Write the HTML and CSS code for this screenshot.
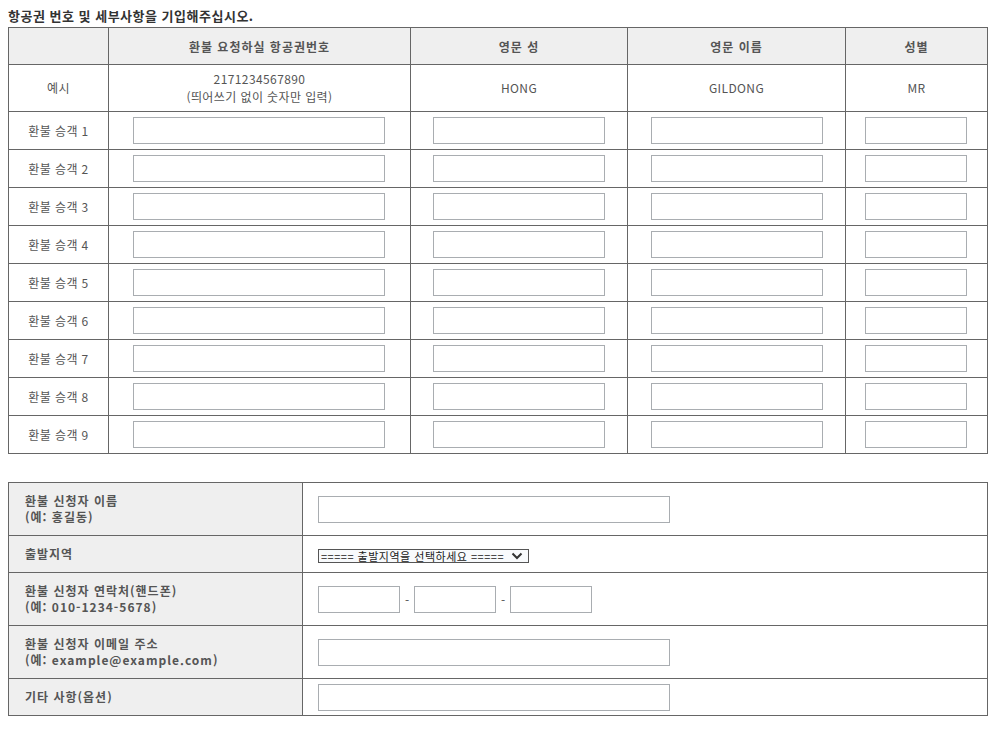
FILE: index.html
```html
<!DOCTYPE html>
<html lang="ko">
<head>
<meta charset="utf-8">
<title>항공권 환불 신청</title>
<link rel="stylesheet" href="styles.css">
</head>
<body>
<h3 class="title">항공권 번호 및 세부사항을 기입해주십시오.</h3>
<table class="pax">
  <colgroup>
    <col class="c1"><col class="c2"><col class="c3"><col class="c4"><col class="c5">
  </colgroup>
  <thead>
    <tr class="head">
      <th></th>
      <th>환불 요청하실 항공권번호</th>
      <th>영문 성</th>
      <th>영문 이름</th>
      <th>성별</th>
    </tr>
  </thead>
  <tbody>
    <tr class="example">
      <td>예시</td>
      <td>2171234567890<br>(띄어쓰기 없이 숫자만 입력)</td>
      <td>HONG</td>
      <td>GILDONG</td>
      <td>MR</td>
    </tr>
    <tr><td>환불 승객 1</td><td><input class="in-ticket" type="text"></td><td><input class="in-name" type="text"></td><td><input class="in-name" type="text"></td><td><input class="in-sex" type="text"></td></tr>
    <tr><td>환불 승객 2</td><td><input class="in-ticket" type="text"></td><td><input class="in-name" type="text"></td><td><input class="in-name" type="text"></td><td><input class="in-sex" type="text"></td></tr>
    <tr><td>환불 승객 3</td><td><input class="in-ticket" type="text"></td><td><input class="in-name" type="text"></td><td><input class="in-name" type="text"></td><td><input class="in-sex" type="text"></td></tr>
    <tr><td>환불 승객 4</td><td><input class="in-ticket" type="text"></td><td><input class="in-name" type="text"></td><td><input class="in-name" type="text"></td><td><input class="in-sex" type="text"></td></tr>
    <tr><td>환불 승객 5</td><td><input class="in-ticket" type="text"></td><td><input class="in-name" type="text"></td><td><input class="in-name" type="text"></td><td><input class="in-sex" type="text"></td></tr>
    <tr><td>환불 승객 6</td><td><input class="in-ticket" type="text"></td><td><input class="in-name" type="text"></td><td><input class="in-name" type="text"></td><td><input class="in-sex" type="text"></td></tr>
    <tr><td>환불 승객 7</td><td><input class="in-ticket" type="text"></td><td><input class="in-name" type="text"></td><td><input class="in-name" type="text"></td><td><input class="in-sex" type="text"></td></tr>
    <tr><td>환불 승객 8</td><td><input class="in-ticket" type="text"></td><td><input class="in-name" type="text"></td><td><input class="in-name" type="text"></td><td><input class="in-sex" type="text"></td></tr>
    <tr><td>환불 승객 9</td><td><input class="in-ticket" type="text"></td><td><input class="in-name" type="text"></td><td><input class="in-name" type="text"></td><td><input class="in-sex" type="text"></td></tr>
  </tbody>
</table>

<table class="applicant">
  <colgroup><col class="a1"><col class="a2"></colgroup>
  <tbody>
    <tr class="tall">
      <th>환불 신청자 이름<br>(예: 홍길동)</th>
      <td><input class="in-wide" type="text"></td>
    </tr>
    <tr class="short">
      <th>출발지역</th>
      <td>
        <span class="select-wrap">
          <select class="region">
            <option>===== 출발지역을 선택하세요 =====</option>
          </select>
          <svg class="chev" width="12" height="8" viewBox="0 0 12 8"><path d="M1.5 1.5 L6 6 L10.5 1.5" fill="none" stroke="#333" stroke-width="2"/></svg>
        </span>
      </td>
    </tr>
    <tr class="tall">
      <th>환불 신청자 연락처(핸드폰)<br>(예: 010-1234-5678)</th>
      <td>
        <div class="phone">
          <input class="in-phone" type="text"><span class="dash">-</span><input class="in-phone" type="text"><span class="dash">-</span><input class="in-phone" type="text">
        </div>
      </td>
    </tr>
    <tr class="tall">
      <th>환불 신청자 이메일 주소<br>(예: example@example.com)</th>
      <td><input class="in-wide" type="text"></td>
    </tr>
    <tr class="short">
      <th>기타 사항(옵션)</th>
      <td><input class="in-wide" type="text"></td>
    </tr>
  </tbody>
</table>
</body>
</html>
```

FILE: styles.css
```css
body {
  margin: 8px;
  font-family: "Noto Sans CJK KR", "Noto Sans", sans-serif;
  font-size: 12px;
  color: #555;
  background: #fff;
}

.title {
  margin: 0;
  height: 19px;
  line-height: 15px;
  font-size: 13px;
  font-weight: bold;
  letter-spacing: 0.5px;
  color: #333;
}

table {
  border-collapse: collapse;
  table-layout: fixed;
  width: 979px;
}

th, td {
  border: 1px solid #666;
  padding: 0;
}

input {
  box-sizing: border-box;
  height: 27px;
  border: 1px solid #a9adb1;
  margin: 0;
  padding: 0 4px;
  vertical-align: middle;
  background: #fff;
  font: inherit;
}

/* passenger table */
.c1 { width: 100px; }
.c2 { width: 302px; }
.c3 { width: 217px; }
.c4 { width: 218px; }
.c5 { width: 142px; }

.pax th, .pax td {
  text-align: center;
  vertical-align: middle;
}

.pax .head th {
  height: 36px;
  background: #efefef;
  font-weight: bold;
  color: #555;
  letter-spacing: 1px;
}

.pax td {
  letter-spacing: 0.4px;
}

.pax .example td {
  height: 46px;
  line-height: 18px;
}

.pax tbody tr td {
  height: 37px;
}

.in-ticket { width: 252px; margin-left: -1px; }
.in-name { width: 172px; }
.in-sex { width: 102px; margin-left: -1px; }

/* applicant table */
.applicant {
  margin-top: 28px;
}

.a1 { width: 294px; }
.a2 { width: 685px; }

.applicant th {
  background: #efefef;
  text-align: left;
  font-weight: bold;
  color: #555;
  padding-left: 16px;
  line-height: 16px;
  letter-spacing: 1px;
}

.applicant td {
  padding-left: 15px;
}

.applicant .tall th, .applicant .tall td { height: 52px; }
.applicant .short th, .applicant .short td { height: 36px; }

.in-wide { width: 352px; }

.phone {
  display: flex;
  align-items: center;
}

.in-phone { width: 82px; }

.dash {
  width: 14px;
  text-align: center;
  color: #555;
}

.select-wrap {
  position: relative;
  display: inline-block;
  vertical-align: middle;
}

.region {
  appearance: none;
  -webkit-appearance: none;
  box-sizing: border-box;
  width: 211px;
  height: 14px;
  margin: 0;
  padding: 0 0 0 2px;
  border: 1px solid #555;
  border-radius: 0;
  background: #f8fafc;
  font-family: "Noto Sans CJK KR", sans-serif;
  font-size: 11px;
  letter-spacing: 0.5px;
  line-height: 12px;
  color: #222;
  display: block;
}

.chev {
  position: absolute;
  right: 6px;
  top: 3px;
  pointer-events: none;
}
```
